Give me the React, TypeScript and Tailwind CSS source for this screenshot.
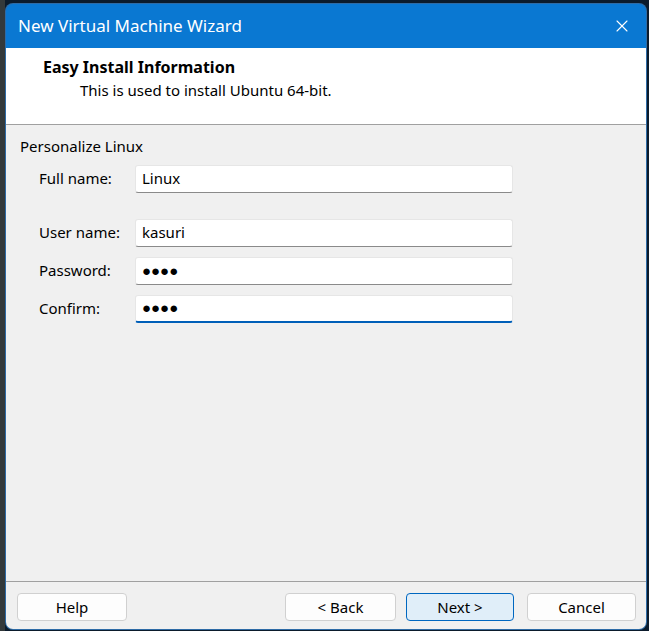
import { X } from 'lucide-react'

const font = { fontFamily: '"Noto Sans", "Open Sans", sans-serif' }

function Field({ label, value, focused, className }: { label: string; value: string; focused?: boolean; className?: string }) {
  return (
    <div className={`flex items-center ${className ?? ''}`}>
      <span className="w-[96px] text-[15px] text-black leading-none -mt-[2px]">{label}</span>
      <div
        className={`w-[378px] h-[28px] bg-white rounded-[3px] border border-[#e6e6e6] flex items-center px-[6px] pb-[2px] text-[15px] text-black ${
          focused ? 'border-b-2 border-b-[#005fb8]' : 'border-b-[#8a8a8a]'
        }`}
      >
        {value}
      </div>
    </div>
  )
}

function Btn({ label, primary, className }: { label: string; primary?: boolean; className: string }) {
  return (
    <button
      className={`${className} h-[28px] rounded-[4px] border text-[15px] text-black flex items-center justify-center ${
        primary ? 'bg-[#e0eef9] border-[#0067c0]' : 'bg-[#fdfdfd] border-[#d0d0d0]'
      }`}
    >
      {label}
    </button>
  )
}

export default function App() {
  return (
    <div className="w-[649px] h-[631px] overflow-hidden bg-[#0b1b2c] flex" style={font}>
      <div className="w-[5px] h-full bg-[#33393b]" />
      <div className="mt-[3px] w-[642px] h-[627px] rounded-[8px] bg-[#2e6ba6] p-[1px] flex flex-col overflow-hidden">
        <div className="h-[44px] bg-[#0a78d2] rounded-t-[7px] flex items-center justify-between pl-[12px] pr-[14px]">
          <span className="text-[17px] text-white">New Virtual Machine Wizard</span>
          <X size={20} strokeWidth={1.3} className="text-white" />
        </div>
        <div className="h-[77px] bg-white border-b border-[#a0a0a0] pl-[37px] pt-[9px]">
          <div className="text-[16px] font-bold text-black leading-[20px]">Easy Install Information</div>
          <div className="text-[15px] text-black leading-[20px] mt-[3px] pl-[37px]">This is used to install Ubuntu 64-bit.</div>
        </div>
        <div className="flex-1 bg-[#f0f0f0] border-b border-[#a0a0a0] pl-[14px] pt-[11px]">
          <div className="text-[15px] text-black leading-[20px]">Personalize Linux</div>
          <div className="pl-[19px] mt-[9px]">
            <Field label="Full name:" value="Linux" />
            <Field label="User name:" value="kasuri" className="mt-[26px]" />
            <Field label="Password:" value="●●●●" className="mt-[10px]" />
            <Field label="Confirm:" value="●●●●" focused className="mt-[10px]" />
          </div>
        </div>
        <div className="h-[47px] bg-[#f0f0f0] flex items-start pt-[11px] pl-[11px] rounded-b-[7px]">
          <Btn label="Help" className="w-[110px]" />
          <div className="flex-1" />
          <div className="flex pr-[10px]">
            <Btn label="< Back" className="w-[111px]" />
            <Btn label="Next >" primary className="w-[108px] ml-[10px]" />
            <Btn label="Cancel" className="w-[109px] ml-[13px]" />
          </div>
        </div>
      </div>
    </div>
  )
}
